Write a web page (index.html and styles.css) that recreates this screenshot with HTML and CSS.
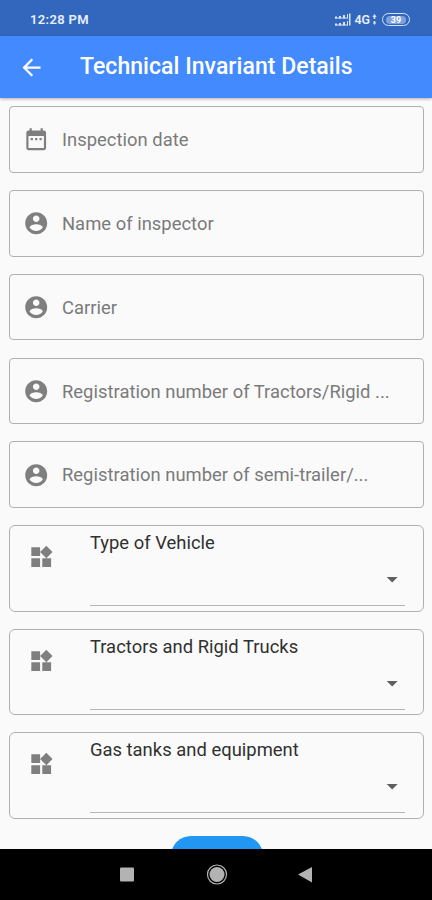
FILE: index.html
```html
<!DOCTYPE html>
<html lang="en">
<head>
<meta charset="utf-8">
<title>Technical Invariant Details</title>
<link rel="stylesheet" href="styles.css">
</head>
<body>
<svg class="defs" width="0" height="0">
  <symbol id="person" viewBox="0 0 24 24"><path d="M12 2C6.48 2 2 6.48 2 12s4.480 10 10 10 10-4.480 10-10S17.520 2 12 2zm0 3c1.660 0 3 1.340 3 3s-1.340 3-3 3-3-1.340-3-3 1.340-3 3-3zm0 14.200c-2.500 0-4.710-1.280-6-3.220.030-1.990 4-3.080 6-3.080 1.990 0 5.970 1.090 6 3.080-1.290 1.940-3.500 3.220-6 3.220z"/></symbol>
  <symbol id="date" viewBox="0 0 24 24"><path d="M9 11H7v2h2v-2zm4 0h-2v2h2v-2zm4 0h-2v2h2v-2zm2-7h-1V2h-2v2H8V2H6v2H5c-1.110 0-1.990.900-1.990 2L3 20c0 1.100.890 2 2 2h14c1.100 0 2-.900 2-2V6c0-1.100-.900-2-2-2zm0 16H5V9h14v11z"/></symbol>
  <symbol id="widgets" viewBox="0 0 24 24"><path d="M13 13v8h8v-8h-8zM3 21h8v-8H3v8zM3 3v8h8V3H3zm13.660-1.310L11 7.340 16.660 13l5.660-5.660-5.660-5.650z"/></symbol>
  <symbol id="drop" viewBox="0 0 24 24"><path d="M7 10l5 5 5-5z"/></symbol>
</svg>
<div class="screen">
  <div class="status">
    <span class="time">12:28 PM</span>
    <div class="indicators">
      <svg class="signal" width="17" height="14" viewBox="0 0 17 14"><path d="M1 3.500h2v2H1zM5 3h2v2.500H5zM9 2h2v3.500H9zM13 1h1v4.500h-1zM15 .5h1.500v12H15zM1 10.500h2v2H1zM5 10h2v2.500H5zM9 9h2v3.500H9zM13 8h1v4.500h-1z"/><path d="M1 4.500h13v1H1zM1 11.500h13v1H1z"/></svg>
      <span class="network">4G</span>
      <svg class="data" width="5" height="12" viewBox="0 0 5 12"><path d="M2.500 0l2.200 3H3.300v2H1.700V3H.3zM1.700 7h1.600v1.500h1L2.500 11 .7 8.500h1z"/></svg>
      <span class="battery"><span class="level">39</span></span>
    </div>
  </div>
  <header class="appbar">
    <svg class="back" viewBox="0 0 24 24"><path d="M20 11H7.830l5.590-5.590L12 4l-8 8 8 8 1.410-1.410L7.830 13H20v-2z"/></svg>
    <h1>Technical Invariant Details</h1>
  </header>
  <main class="form">
    <div class="field"><svg class="icon"><use href="#date"/></svg><span>Inspection date</span></div>
    <div class="field"><svg class="icon"><use href="#person"/></svg><span>Name of inspector</span></div>
    <div class="field"><svg class="icon"><use href="#person"/></svg><span>Carrier</span></div>
    <div class="field"><svg class="icon"><use href="#person"/></svg><span>Registration number of Tractors/Rigid ...</span></div>
    <div class="field"><svg class="icon"><use href="#person"/></svg><span>Registration number of semi-trailer/...</span></div>
    <div class="card"><svg class="icon"><use href="#widgets"/></svg><div class="select"><span>Type of Vehicle</span><svg class="icon arrow"><use href="#drop"/></svg></div></div>
    <div class="card"><svg class="icon"><use href="#widgets"/></svg><div class="select"><span>Tractors and Rigid Trucks</span><svg class="icon arrow"><use href="#drop"/></svg></div></div>
    <div class="card"><svg class="icon"><use href="#widgets"/></svg><div class="select"><span>Gas tanks and equipment</span><svg class="icon arrow"><use href="#drop"/></svg></div></div>
    <div class="submit"></div>
  </main>
  <nav class="navbar">
    <svg width="432" height="51" viewBox="0 0 432 51"><rect x="120" y="18.500" width="14" height="14" rx="1"/><circle cx="217" cy="25.500" r="7.500"/><circle class="ring" cx="217" cy="25.500" r="9.500"/><path d="M298 25.500L312 18v15.500z"/></svg>
  </nav>
</div>
</body>
</html>
```
FILE: styles.css
```css
* { box-sizing: border-box; }
body { margin: 0; font-family: Roboto, "Liberation Sans", sans-serif; }
.defs { position: absolute; }
.screen {
  width: 432px;
  height: 900px;
  display: flex;
  flex-direction: column;
  overflow: hidden;
  background: #fafafa;
}
.status {
  flex: none;
  height: 36px;
  padding: 3px 22px 0 30px;
  display: flex;
  align-items: center;
  justify-content: space-between;
  background: #3267bd;
  color: #e8f0ff;
}
.time { font-size: 13px; font-weight: 600; letter-spacing: 0.350px; }
.indicators { display: flex; align-items: center; }
.indicators svg { fill: #d5e3fb; }
.network { margin-left: 4px; font-size: 12.500px; font-weight: 600; letter-spacing: -0.1px; }
.data { margin: 0 5px 0 2px; }
.battery {
  width: 28px;
  height: 13px;
  border: 1.500px solid #d5e3fb;
  border-radius: 7px;
  display: flex;
  align-items: center;
  justify-content: center;
}
.level {
  width: 20px;
  height: 8px;
  border-radius: 4px;
  background: #7fa3df;
  font-size: 9px;
  line-height: 8px;
  font-weight: 700;
  text-align: center;
  color: #fff;
}
.appbar {
  position: relative;
  flex: none;
  height: 62px;
  padding: 0 0 0 18px;
  display: flex;
  align-items: center;
  background: #448aff;
  box-shadow: 0 1px 3px rgba(0, 0, 0, 0.3);
  color: #fff;
}
.back { width: 27px; height: 27px; fill: #fff; }
h1 {
  margin: 0 0 1px 35px;
  font-size: 23px;
  font-weight: 500;
  letter-spacing: 0.050px;
  white-space: nowrap;
}
.form { flex: 1; min-height: 0; overflow: hidden; padding: 8.300px 8px 0 9px; }
.field {
  height: 66.500px;
  margin-bottom: 17.300px;
  padding-left: 13px;
  display: flex;
  align-items: center;
  gap: 12.600px;
  border: 1px solid #b0b0b0;
  border-radius: 4px;
  font-size: 18.400px;
  letter-spacing: 0.020px;
  color: #7a7a7a;
  white-space: nowrap;
}
.field span { padding-top: 0.500px; }
.icon { flex: none; width: 26.400px; height: 26.400px; fill: #7f7f7f; }
.card {
  height: 86.500px;
  margin-bottom: 17.100px;
  padding: 0 18px 4.500px 18px;
  display: flex;
  gap: 35.500px;
  border: 1px solid #b0b0b0;
  border-radius: 6px;
}
.card > .icon { margin-top: 18px; }
.select {
  flex: 1;
  display: flex;
  flex-direction: column;
  border-bottom: 1px solid #b5b5b5;
  padding-top: 5.700px;
  font-size: 18.400px;
  line-height: 21px;
  letter-spacing: 0.020px;
  color: #303030;
}
.arrow { align-self: flex-end; margin-top: 13.300px; fill: #5f5f5f; }
.submit { width: 92px; height: 40px; margin: 0 auto; border-radius: 22px; background: #2196f3; }
.navbar { flex: none; height: 51px; background: #000; }
.navbar svg { display: block; fill: #b3b3b3; }
.navbar .ring { fill: none; stroke: #b3b3b3; stroke-width: 1.200; }
```
